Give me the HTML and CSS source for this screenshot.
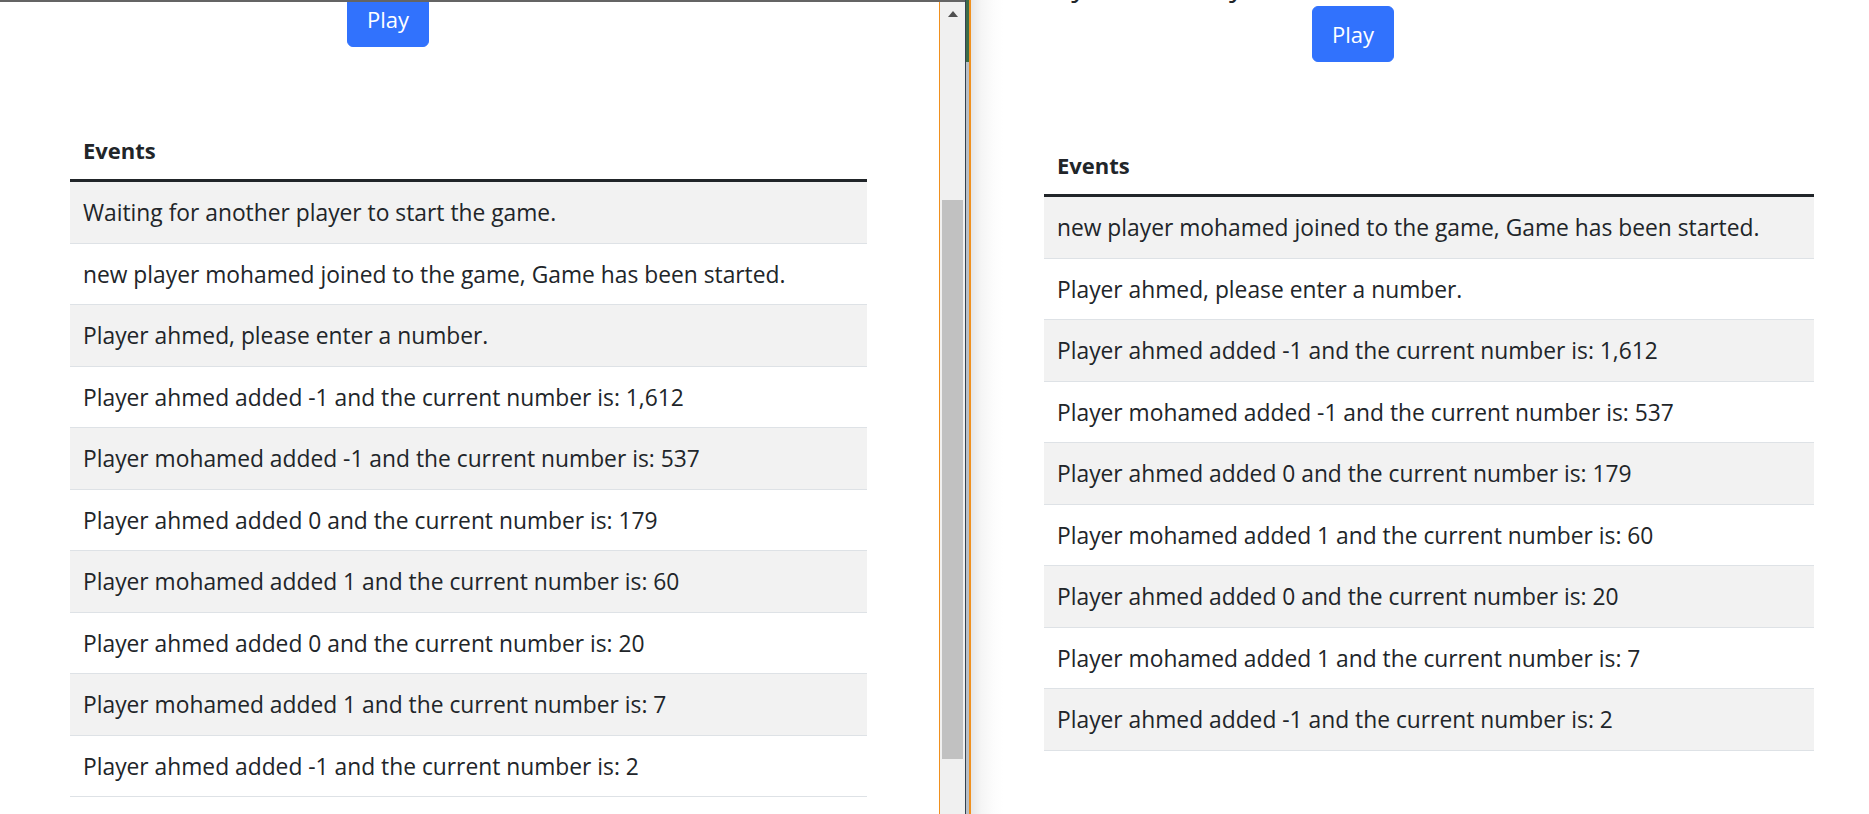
FILE: index.html
```html
<!DOCTYPE html>
<html lang="en">
<head>
<meta charset="utf-8">
<title>Events</title>
<link rel="stylesheet" href="styles.css">
</head>
<body>
<div class="screen">
  <div class="win-left">
    <div class="viewport">
      <div class="page page-left">
        <div class="play-row"><button class="btn-play">Play</button></div>
        <table class="events events-left">
          <thead><tr><th>Events</th></tr></thead>
          <tbody>
            <tr><td>Waiting for another player to start the game.</td></tr>
            <tr><td>new player mohamed joined to the game, Game has been started.</td></tr>
            <tr><td>Player ahmed, please enter a number.</td></tr>
            <tr><td>Player ahmed added -1 and the current number is: 1,612</td></tr>
            <tr><td>Player mohamed added -1 and the current number is: 537</td></tr>
            <tr><td>Player ahmed added 0 and the current number is: 179</td></tr>
            <tr><td>Player mohamed added 1 and the current number is: 60</td></tr>
            <tr><td>Player ahmed added 0 and the current number is: 20</td></tr>
            <tr><td>Player mohamed added 1 and the current number is: 7</td></tr>
            <tr><td>Player ahmed added -1 and the current number is: 2</td></tr>
          </tbody>
        </table>
      </div>
    </div>
    <div class="win-divider"></div>
    <div class="scrollbar">
      <div class="arrow-up"></div>
      <div class="thumb"></div>
    </div>
  </div>
  <div class="edge">
    <div class="edge-dark"></div>
    <div class="edge-mid"></div>
    <div class="edge-orange"></div>
  </div>
  <div class="win-right">
    <div class="page page-right">
      <div class="top-line">Player ahmed your turn</div>
      <div class="play-row play-row-right"><button class="btn-play">Play</button></div>
      <table class="events events-right">
        <thead><tr><th>Events</th></tr></thead>
        <tbody>
          <tr><td>new player mohamed joined to the game, Game has been started.</td></tr>
          <tr><td>Player ahmed, please enter a number.</td></tr>
          <tr><td>Player ahmed added -1 and the current number is: 1,612</td></tr>
          <tr><td>Player mohamed added -1 and the current number is: 537</td></tr>
          <tr><td>Player ahmed added 0 and the current number is: 179</td></tr>
          <tr><td>Player mohamed added 1 and the current number is: 60</td></tr>
          <tr><td>Player ahmed added 0 and the current number is: 20</td></tr>
          <tr><td>Player mohamed added 1 and the current number is: 7</td></tr>
          <tr><td>Player ahmed added -1 and the current number is: 2</td></tr>
        </tbody>
      </table>
    </div>
  </div>
</div>
</body>
</html>
```

FILE: styles.css
```css
html, body {
  margin: 0;
  padding: 0;
  background: #ffffff;
}

body {
  font-family: "Open Sans", "Noto Sans", sans-serif;
  color: #212529;
}

.screen {
  display: flex;
  width: 1869px;
  height: 814px;
  overflow: hidden;
}

/* ---------- left window ---------- */
.win-left {
  display: flex;
  width: 965px;
  height: 812px;
  border-top: 2px solid #646464;
  flex: none;
}

.viewport {
  width: 939px;
  height: 812px;
  overflow: hidden;
  background: #ffffff;
}

.win-divider {
  width: 1px;
  background: #f0901e;
}

.scrollbar {
  width: 25px;
  background: #f0f0f0;
  display: flex;
  flex-direction: column;
  align-items: center;
  padding-top: 9px;
  box-sizing: border-box;
}

.arrow-up {
  width: 0;
  height: 0;
  border-left: 5.5px solid transparent;
  border-right: 5.5px solid transparent;
  border-bottom: 6px solid #505050;
}

.thumb {
  margin-top: 183px;
  width: 21px;
  height: 559px;
  background: #c1c1c1;
}

/* ---------- window edge ---------- */
.edge {
  display: flex;
  flex: none;
  height: 814px;
}

.edge-dark {
  width: 1px;
  background: #33414f;
}

.edge-mid {
  width: 3px;
  background: linear-gradient(#3c6c47 0, #3c6c47 62px, #b9c0c8 62px, #b9c0c8 100%);
}

.edge-orange {
  width: 2px;
  background: #f0901e;
}

/* ---------- right window ---------- */
.win-right {
  flex: 1;
  height: 814px;
  overflow: hidden;
  background: linear-gradient(to right, #e6e6e6 0, #f5f5f5 10px, #fcfcfc 22px, #ffffff 32px);
}

/* ---------- page content ---------- */
.page-left {
  padding-left: 70px;
}

.page-right {
  padding-left: 73px;
}

.play-row {
  display: flex;
}

.page-left .play-row {
  margin-top: -11px;
  padding-left: 277px;
}

.play-row-right {
  margin-top: 6px;
  padding-left: 268px;
}

.top-line {
  margin-top: -30px;
  margin-left: -15px;
  height: 30px;
  font-size: 30px;
  line-height: 30px;
  white-space: nowrap;
}

.btn-play {
  width: 82px;
  height: 56px;
  padding: 0;
  border: 1px solid #3172fd;
  border-radius: 6px;
  background: #3172fd;
  color: #ffffff;
  font-family: "Open Sans", "Noto Sans", sans-serif;
  font-size: 22px;
  line-height: 30px;
  display: flex;
  align-items: center;
  justify-content: center;
}

.events {
  border-collapse: collapse;
  font-size: 22.8px;
  text-align: left;
}

.events-left {
  width: 797px;
  margin-top: 72px;
}

.events-right {
  width: 770px;
  margin-top: 72px;
}

.events th {
  padding: 16px 13px 14px;
  line-height: 30px;
  font-size: 22px;
  font-weight: 700;
  border-bottom: 3px solid #212529;
}

.events td {
  padding: 16px 13px 14px;
  line-height: 30.5px;
  border-bottom: 1px solid #dee2e6;
  white-space: nowrap;
}

.events tbody tr:nth-child(odd) td {
  background: #f2f2f2;
}
```
